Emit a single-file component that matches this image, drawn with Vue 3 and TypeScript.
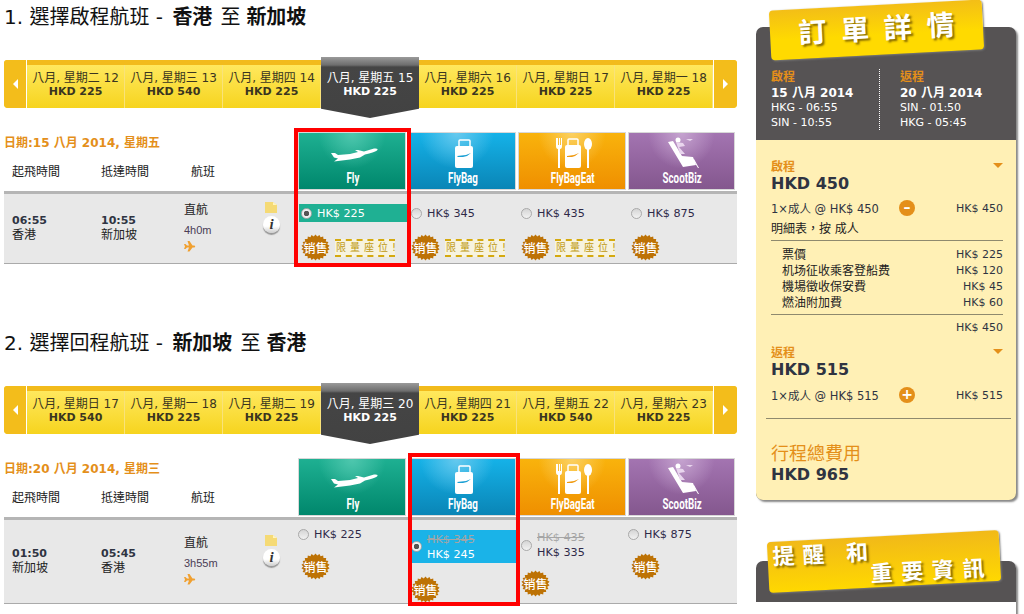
<template>
  <div class="page">
    <main class="flights">
      <section v-for="leg in legs" :key="leg.no" class="leg">
        <h2 class="leg-title">
          {{ leg.no }}. {{ leg.title }} -
          <b class="from">{{ leg.from }}</b>
          <span class="to">至</span>
          <b>{{ leg.dest }}</b>
        </h2>

        <div class="strip">
          <div class="arrow"><i class="tri-left"></i></div>
          <div v-for="d in leg.days" :key="d.label" class="day" :class="{ active: d.active }">
            <div>{{ d.label }}</div>
            <b>HKD {{ d.price }}</b>
          </div>
          <div class="arrow right"><i class="tri-right"></i></div>
        </div>

        <div class="table">
          <div class="head-left">
            <div class="date-label">{{ leg.date }}</div>
            <div class="heads">
              <span class="c-dep">起飛時間</span>
              <span class="c-arr">抵達時間</span>
              <span>航班</span>
            </div>
          </div>
          <div v-for="plan in plans" :key="plan.name" class="logo" :class="plan.cls">
            <svg width="107" height="56" viewBox="0 0 107 56">
              <g v-if="plan.cls === 'fly'" fill="#fff">
                <path d="M32 20 l4 0 l3 2 l12 -1 l8 -2 l-3 -2 l3 0 l6 1.500 l10 -3 q5 -.5 3 2 q-3 2 -12 4 l-5 3 l-10 2 l-16 2 l4 -3 l-4 -1 z" />
              </g>
              <g v-else-if="plan.cls === 'bag'">
                <path d="M50 13 v-5 q0 -1 1 -1 h9 q1 0 1 1 v5" fill="none" stroke="#fff" stroke-width="1.500" />
                <rect x="46" y="13" width="18" height="22" rx="2" fill="#fff" />
                <path d="M48 23 l9 -1 l5 -2 l-4 3 l-4 1 l-5 0 z" fill="#1a9fd4" />
              </g>
              <g v-else-if="plan.cls === 'eat'">
                <path d="M37 5 v8 q0 3 2 3 v19 h2 v-19 q2 0 2 -3 v-8 h-1 v7 h-1 v-7 h-1 v7 h-1 v-7 z" fill="#fff" />
                <path d="M49 12 v-5 q0 -1 1 -1 h8 q1 0 1 1 v5" fill="none" stroke="#fff" stroke-width="1.500" />
                <rect x="46" y="12" width="16" height="23" rx="2" fill="#fff" />
                <path d="M48 23 l7 -1 l5 -2 l-4 3 l-3 1 l-5 0 z" fill="#f09a10" />
                <ellipse cx="69" cy="11" rx="4" ry="6" fill="#fff" />
                <rect x="68" y="16" width="2" height="19" fill="#fff" />
              </g>
              <g v-else fill="#fff">
                <circle cx="49" cy="7" r="2.500" />
                <path d="M39 9 l5 -1 l9 15 l11 1 l3 8 l-13 2 z" />
                <path d="M47 9 l7 1 l2 3 l-6 1 l6 7 l-5 0 z" fill="#e9d6ee" />
                <path d="M57 6 h7 l-3 2 z" fill="#e9d6ee" />
                <path d="M65 26 l5 9 l-1 0 l-5 -8 z" />
              </g>
            </svg>
            <span class="logo-name">{{ plan.name }}</span>
          </div>

          <div class="cell time c-dep">
            <b>{{ leg.dep.time }}</b>
            <span>{{ leg.dep.city }}</span>
          </div>
          <div class="cell time">
            <b>{{ leg.arr.time }}</b>
            <span>{{ leg.arr.city }}</span>
          </div>
          <div class="cell info">
            <span>直航</span>
            <span class="duration">{{ leg.duration }}</span>
            <svg width="12" height="11" viewBox="0 0 12 11">
              <path d="M0 3 h1.500 l1.500 1.500 h2 l-1.500 -4.500 h2 l3 4.500 h2 q1.500 1 0 2 h-2 l-3 4 h-2 l1.500 -4 h-2 l-1.500 1.500 h-1.500 l1 -2.500 z" fill="#f0a030" />
            </svg>
          </div>
          <div class="cell notes">
            <svg width="12" height="11" viewBox="0 0 12 11">
              <path d="M0 0 h8 l4 3 v8 h-12 z" fill="#f5da75" />
              <path d="M8 0 v3 h4 z" fill="#fff4c0" />
            </svg>
            <span class="info-ball">i</span>
          </div>
          <div v-for="f in leg.fares" :key="f.base" class="cell fare" :class="f.kind">
            <div class="option" :class="[{ picked: f.picked }, leg.tint && f.picked ? leg.tint : '']">
              <span class="radio" :class="{ on: f.picked }"></span>
              <span class="amounts">
                <s v-if="f.old">HK$ {{ f.old }}</s>
                <span>HK$ {{ f.base }}</span>
              </span>
            </div>
            <div class="promo">
              <span class="sale">
                <svg width="29" height="27" viewBox="-14.500 -13.500 29 27">
                  <polygon :points="burst" fill="#bd7205" />
                </svg>
                <span class="sale-text">销售</span>
              </span>
              <span v-if="f.limited" class="limited">限量座位!</span>
            </div>
          </div>

          <div class="frame" :class="leg.frame"></div>
        </div>
      </section>
    </main>

    <aside class="side">
      <div class="panel">
        <div class="ribbon order"><span>訂 單 詳 情</span></div>
        <div class="summary">
          <div v-for="s in summary" :key="s.title" class="sum-col">
            <div class="sum-title">{{ s.title }}</div>
            <b>{{ s.date }}</b>
            <div>{{ s.a }}</div>
            <div>{{ s.b }}</div>
          </div>
        </div>
        <div class="bill">
          <div class="bill-title"><span>啟程</span><i class="caret"></i></div>
          <div class="amount">HKD 450</div>
          <div class="line">
            <span>1×成人 @ HK$ 450</span>
            <span class="round">–</span>
            <span class="r">HK$ 450</span>
          </div>
          <div class="breakdown">明細表，按 成人</div>
          <div class="items">
            <div v-for="i in items" :key="i.name" class="item">
              <span>{{ i.name }}</span><span>HK$ {{ i.value }}</span>
            </div>
          </div>
          <div class="subtotal">HK$ 450</div>

          <div class="bill-title back"><span>返程</span><i class="caret"></i></div>
          <div class="amount">HKD 515</div>
          <div class="line last">
            <span>1×成人 @ HK$ 515</span>
            <span class="round">+</span>
            <span class="r">HK$ 515</span>
          </div>
          <div class="total">
            <div class="total-title">行程總費用</div>
            <div class="amount">HKD 965</div>
          </div>
        </div>
      </div>

      <div class="panel notice">
        <div class="ribbon remind">
          <span>提 醒　和</span>
          <span class="second">重 要 資 訊</span>
        </div>
        <div class="notice-dark"></div>
        <div class="notice-body"></div>
      </div>
    </aside>
  </div>
</template>

<script setup lang="ts">
interface Fare {
  base: number
  old?: number
  picked?: boolean
  limited?: boolean
  kind: string
}

const plans = [
  { name: 'Fly', cls: 'fly' },
  { name: 'FlyBag', cls: 'bag' },
  { name: 'FlyBagEat', cls: 'eat' },
  { name: 'ScootBiz', cls: 'biz' }
]

function days(labels: string[], start: number, prices: number[], activeAt: number) {
  return labels.map((w, i) => ({
    label: `八月, 星期${w} ${start + i}`,
    price: prices[i],
    active: i === activeAt
  }))
}

const firstFares: Fare[] = [
  { base: 225, picked: true, limited: true, kind: 'first' },
  { base: 345, limited: true, kind: 'std' },
  { base: 435, limited: true, kind: 'std' },
  { base: 875, kind: 'std' }
]

const secondFares: Fare[] = [
  { base: 225, kind: 'single' },
  { base: 245, old: 345, picked: true, kind: 'double' },
  { base: 335, old: 435, kind: 'double near' },
  { base: 875, kind: 'single' }
]

const legs = [
  {
    no: 1,
    title: '選擇啟程航班',
    from: '香港',
    dest: '新加坡',
    days: days(['二', '三', '四', '五', '六', '日', '一'], 12, [225, 540, 225, 225, 225, 225, 225], 3),
    date: '日期:15 八月 2014, 星期五',
    dep: { time: '06:55', city: '香港' },
    arr: { time: '10:55', city: '新加坡' },
    duration: '4h0m',
    fares: firstFares,
    tint: 'green',
    frame: 'frame-fly'
  },
  {
    no: 2,
    title: '選擇回程航班',
    from: '新加坡',
    dest: '香港',
    days: days(['日', '一', '二', '三', '四', '五', '六'], 17, [540, 225, 225, 225, 225, 540, 225], 3),
    date: '日期:20 八月 2014, 星期三',
    dep: { time: '01:50', city: '新加坡' },
    arr: { time: '05:45', city: '香港' },
    duration: '3h55m',
    fares: secondFares,
    tint: 'blue',
    frame: 'frame-bag'
  }
]

const summary = [
  { title: '啟程', date: '15 八月 2014', a: 'HKG - 06:55', b: 'SIN - 10:55' },
  { title: '返程', date: '20 八月 2014', a: 'SIN - 01:50', b: 'HKG - 05:45' }
]

const items = [
  { name: '票價', value: 225 },
  { name: '机场征收乘客登船费', value: 120 },
  { name: '機場徵收保安費', value: 45 },
  { name: '燃油附加費', value: 60 }
]

// spiky sale sticker outline
const burst = Array.from({ length: 44 }, (_, i) => {
  const r = i % 2 ? 14.2 : 12.2
  const a = (i / 44) * Math.PI * 2
  return `${(Math.cos(a) * r).toFixed(2)},${((Math.sin(a) * r) * 0.92).toFixed(2)}`
}).join(' ')
</script>

<style>
html, body {
  margin: 0;
  background: #fff;
  overflow: hidden;
}
</style>

<style scoped>
.page {
  width: 1024px;
  height: 614px;
  overflow: hidden;
  display: flex;
  align-items: flex-start;
  font-family: "DejaVu Sans", "Noto Sans CJK TC", sans-serif;
  font-size: 11px;
  color: #2f3442;
}
.flights {
  width: 733px;
  margin-left: 4px;
  flex-shrink: 0;
}
.leg + .leg {
  margin-top: 62px;
}
.leg-title {
  margin: 0;
  height: 32px;
  line-height: 34px;
  font-size: 20px;
  font-weight: 400;
  color: #111;
  white-space: nowrap;
}
.leg-title b {
  font-weight: 700;
}
.from {
  margin-left: 3px;
}
.to {
  margin: 0 6px 0 8px;
}

/* date strip */
.strip {
  display: flex;
  height: 43px;
  margin-top: 28px;
  border-top: 5px solid #f2bb1c;
  border-radius: 4px;
  background: linear-gradient(#ffe85e, #f6d41e);
}
.arrow {
  width: 22px;
  flex-shrink: 0;
  margin-top: -5px;
  background: #f3bd1b;
  border-right: 1px solid #fff;
  border-radius: 3px 0 0 4px;
  display: flex;
  align-items: center;
  justify-content: center;
}
.arrow.right {
  width: 23px;
  border-right: none;
  border-left: 1px solid #fff;
  border-radius: 0 3px 4px 0;
}
.tri-left, .tri-right {
  width: 0;
  height: 0;
  border-top: 5px solid transparent;
  border-bottom: 5px solid transparent;
}
.tri-left {
  border-right: 5px solid #fff;
}
.tri-right {
  border-left: 5px solid #fff;
}
.day {
  width: 98px;
  box-sizing: border-box;
  padding-top: 6px;
  line-height: 14px;
  font-size: 12px;
  text-align: center;
  color: #3a3520;
  border-right: 1px solid #f9e27a;
  white-space: nowrap;
}
.day b {
  font-size: 11px;
  display: block;
}
.day.active {
  height: 61px;
  margin-top: -8px;
  padding-top: 14px;
  color: #fff;
  border-right: none;
  position: relative;
  z-index: 1;
  background: linear-gradient(#9a9a9a, #6e6e6e 8px, #454545 10px, #424242);
  clip-path: polygon(0 0, 100% 0, 100% 85%, 50% 100%, 0 85%);
}

/* fares table */
.table {
  position: relative;
  display: grid;
  grid-template-columns: 97px 83px 76px 38px 110px 110px 110px 109px;
  grid-template-rows: 59px auto;
  margin-top: 24px;
}
.head-left {
  grid-column: 1 / 5;
}
.date-label {
  margin-top: 3px;
  line-height: 16px;
  font-size: 12px;
  font-weight: 700;
  color: #e48f1a;
}
.heads {
  display: flex;
  margin-top: 13px;
  font-size: 12px;
  line-height: 16px;
  color: #222;
}
.c-dep {
  width: 97px;
  box-sizing: border-box;
  padding-left: 8px;
}
.c-arr {
  width: 90px;
}
.logo {
  display: grid;
  height: 58px;
  box-sizing: border-box;
  border: 1px solid #d8d8d8;
  margin-right: 2px;
  overflow: hidden;
}
.logo svg, .logo-name {
  grid-area: 1 / 1;
}
.logo-name {
  align-self: end;
  justify-self: center;
  margin-bottom: 2px;
  font-family: Roboto, sans-serif;
  font-size: 15px;
  font-weight: 700;
  line-height: 18px;
  color: #fff;
  transform: scaleX(0.65);
}
.fly {
  background: radial-gradient(ellipse at 50% 0, #4fc7ae 0, transparent 45%), linear-gradient(#1eb092, #00876c);
}
.bag {
  background: radial-gradient(ellipse at 45% 0, #67c9ee 0, transparent 45%), linear-gradient(#15b2e8, #0a85b6);
}
.eat {
  background: radial-gradient(ellipse at 50% 0, #fbd062 0, transparent 45%), linear-gradient(#f9b30c, #ef8f00);
}
.biz {
  background: radial-gradient(ellipse at 50% 0, #c5a3cf 0, transparent 45%), linear-gradient(#a374b1, #84578e);
}
.cell {
  background: #e8e8e8;
  border-top: 3px solid #b5b5b5;
  border-bottom: 1px solid #aaa;
  line-height: 15px;
}
.time {
  display: flex;
  flex-direction: column;
  justify-content: center;
  padding-bottom: 2px;
}
.time span {
  font-size: 12px;
  color: #222;
}
.info {
  display: flex;
  flex-direction: column;
  justify-content: center;
  padding-bottom: 2px;
}
.info span {
  font-size: 12px;
  color: #222;
}
.info .duration {
  margin: 5px 0 3px;
  font-family: "Liberation Sans", sans-serif;
  font-size: 11px;
  color: #4a3d55;
}
.notes {
  display: flex;
  flex-direction: column;
  align-items: flex-start;
  justify-content: center;
  gap: 3px;
  padding-left: 5px;
  padding-bottom: 22px;
}
.info-ball {
  width: 17px;
  height: 17px;
  margin-left: -2px;
  border-radius: 50%;
  background: linear-gradient(#fff 60%, #ccc);
  box-shadow: 0 2px 1px #999;
  font-family: "Liberation Serif", serif;
  font-size: 15px;
  font-weight: 700;
  font-style: italic;
  line-height: 17px;
  text-align: center;
  color: #333;
}
.option {
  display: flex;
  align-items: center;
  min-height: 18px;
  box-sizing: border-box;
  padding-left: 3px;
  gap: 5px;
  font-size: 11.2px;
  color: #2f2a48;
}
.amounts {
  display: flex;
  flex-direction: column;
}
.amounts s {
  color: #a5a5a5;
}
.picked {
  color: #fff;
}
.picked.green {
  background: #1fb093;
  margin: 0 1px;
  padding-left: 2px;
}
.picked.blue {
  background: #1ab3e8;
  min-height: 33px;
}
.radio {
  width: 11px;
  height: 11px;
  flex-shrink: 0;
  box-sizing: border-box;
  border: 1px solid #a9a9a9;
  border-radius: 50%;
  background: linear-gradient(#d5d5d5, #f2f2f2);
}
.radio.on {
  background: radial-gradient(circle, #555 0 2.500px, #f0f0f0 3px);
}
.first, .std {
  padding-top: 10px;
  padding-bottom: 2px;
}
.single {
  padding-top: 5px;
}
.single .option {
  padding-left: 0;
}
.double {
  padding-top: 10px;
}
.promo {
  display: flex;
  align-items: center;
  gap: 5px;
  margin-top: 12px;
  padding-left: 3px;
}
.single .promo {
  margin-top: 10px;
}
.double .promo {
  margin-top: 13px;
}
.double.near .promo {
  margin-top: 10px;
}
.sale {
  display: grid;
  place-items: center;
  width: 29px;
  height: 27px;
}
.sale svg, .sale-text {
  grid-area: 1 / 1;
}
.sale-text {
  font-family: "Noto Sans CJK SC", sans-serif;
  font-size: 12px;
  font-weight: 500;
  color: #fff;
}
.limited {
  width: 60px;
  height: 18px;
  box-sizing: border-box;
  padding-left: 1px;
  border-top: 2px dashed #d4a90f;
  border-bottom: 2px dashed #d4a90f;
  background: #f7f3df;
  font-size: 10px;
  line-height: 14px;
  letter-spacing: 4px;
  white-space: nowrap;
  color: #c09a10;
}
.frame {
  position: absolute;
  grid-row: 1 / 3;
  border: 4px solid #f00;
  z-index: 2;
  pointer-events: none;
}
.frame-fly {
  grid-column: 5 / 6;
  inset: -4px -3px -3px -4px;
}
.frame-bag {
  grid-column: 6 / 7;
  inset: -5px -2px -2px 0;
}

/* order panel */
.side {
  width: 260px;
  margin-left: 19px;
  flex-shrink: 0;
  padding-top: 27px;
}
.panel {
  position: relative;
  background: #565354;
  border-radius: 7px;
  box-shadow: 2px 2px 2px #888;
}
.ribbon {
  position: absolute;
  background: linear-gradient(#f3be17, #ffda00 60%);
  border-radius: 4px;
  box-shadow: 1px 1px 2px #777;
  transform: rotate(-3deg);
  color: #fff;
  font-weight: 700;
  text-shadow: 2px 2px 2px #8a6d00;
  white-space: nowrap;
}
.order {
  left: 14px;
  top: -22px;
  width: 213px;
  height: 50px;
  font-size: 28px;
  line-height: 50px;
  word-spacing: 5px;
  text-align: center;
}
.remind {
  left: 12px;
  top: -25px;
  width: 232px;
  height: 51px;
  padding: 5px 0 0 5px;
  box-sizing: border-box;
  font-size: 22px;
  line-height: 22px;
  background: linear-gradient(#f1b919, #ffd800);
}
.remind span {
  display: block;
}
.remind .second {
  text-align: right;
  padding-right: 16px;
  word-spacing: 1px;
}
.summary {
  display: grid;
  grid-template-columns: 108px 1fr;
  height: 113px;
  box-sizing: border-box;
  padding: 42px 0 13px 15px;
  color: #fff;
  font-size: 11px;
  line-height: 14.500px;
}
.sum-col b {
  display: block;
  font-size: 12px;
  line-height: 16px;
}
.sum-col + .sum-col {
  border-left: 1px dotted #fff;
  padding-left: 20px;
}
.sum-title {
  font-size: 12px;
  font-weight: 700;
  line-height: 16px;
  color: #e48f1a;
}
.bill {
  background: #fff0b5;
  border-radius: 0 0 7px 7px;
  padding: 18px 13px 15px 15px;
  height: 360px;
  box-sizing: border-box;
}
.bill-title {
  display: flex;
  justify-content: space-between;
  align-items: center;
  height: 14px;
  font-size: 12px;
  font-weight: 700;
  color: #e48f1a;
}
.back {
  margin-top: 8px;
}
.caret {
  width: 0;
  height: 0;
  border-left: 5px solid transparent;
  border-right: 5px solid transparent;
  border-top: 5px solid #e48f1a;
}
.amount {
  height: 22px;
  font-size: 16px;
  font-weight: 700;
  line-height: 24px;
  color: #2f3442;
}
.line {
  display: grid;
  grid-template-columns: 128px 16px 1fr;
  align-items: center;
  margin-top: 6px;
  height: 16px;
  font-size: 11.5px;
}
.line.last {
  margin-top: 7px;
}
.r {
  text-align: right;
  font-size: 11px;
}
.round {
  width: 16px;
  height: 16px;
  border-radius: 50%;
  background: #e48f1a;
  color: #fff;
  font-size: 14px;
  font-weight: 700;
  line-height: 15px;
  text-align: center;
}
.breakdown {
  margin-top: 4px;
  height: 20px;
  border-bottom: 1px solid #8f8a6e;
  font-size: 12px;
  line-height: 18px;
  color: #222;
}
.items {
  padding: 6px 0 3px 11px;
  border-bottom: 1px solid #8f8a6e;
}
.item {
  display: flex;
  justify-content: space-between;
  height: 16px;
  line-height: 16px;
  font-size: 12px;
  color: #222;
}
.item span:last-child {
  font-size: 11px;
  color: #2f3442;
}
.subtotal {
  margin-top: 5px;
  height: 16px;
  line-height: 16px;
  text-align: right;
}
.total {
  margin: 15px -8px 0 -5px;
  padding: 25px 8px 0 5px;
  border-top: 1px solid #8f8a6e;
}
.total-title {
  font-size: 18px;
  line-height: 19px;
  color: #e48f1a;
}
.notice {
  margin-top: 61px;
  background: none;
}
.notice-dark {
  height: 41px;
  background: #565354;
  border-radius: 7px 7px 0 0;
}
.notice-body {
  height: 60px;
  background: #fff;
}
</style>
